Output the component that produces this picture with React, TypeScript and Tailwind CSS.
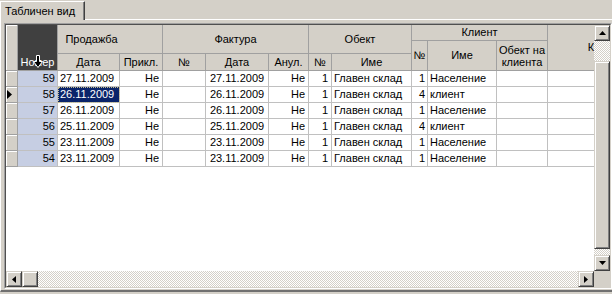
import React from "react";

type Row = {
  n: number;
  d: string;
  p: string;
  fd: string;
  a: string;
  on: number;
  oi: string;
  kn: number;
  ki: string;
  sel?: boolean;
};

const rows: Row[] = [
  { n: 59, d: "27.11.2009", p: "Не", fd: "27.11.2009", a: "Не", on: 1, oi: "Главен склад", kn: 1, ki: "Население" },
  { n: 58, d: "26.11.2009", p: "Не", fd: "26.11.2009", a: "Не", on: 1, oi: "Главен склад", kn: 4, ki: "клиент", sel: true },
  { n: 57, d: "26.11.2009", p: "Не", fd: "26.11.2009", a: "Не", on: 1, oi: "Главен склад", kn: 1, ki: "Население" },
  { n: 56, d: "25.11.2009", p: "Не", fd: "25.11.2009", a: "Не", on: 1, oi: "Главен склад", kn: 4, ki: "клиент" },
  { n: 55, d: "23.11.2009", p: "Не", fd: "23.11.2009", a: "Не", on: 1, oi: "Главен склад", kn: 1, ki: "Население" },
  { n: 54, d: "23.11.2009", p: "Не", fd: "23.11.2009", a: "Не", on: 1, oi: "Главен склад", kn: 1, ki: "Население" },
];

const hc =
  "bg-[#d4d0c8] border-r border-b border-[#a0a0a0] flex items-center justify-center overflow-hidden whitespace-nowrap";
const dc = "border-r border-b border-[#c0c0c0] h-[16px] flex items-center overflow-hidden whitespace-nowrap px-[2px]";
const btn =
  "bg-[#d4d0c8] border border-t-[#d4d0c8] border-l-[#d4d0c8] border-r-[#404040] border-b-[#404040] shadow-[inset_1px_1px_0_#ffffff,inset_-1px_-1px_0_#808080] flex items-center justify-center";
const track =
  "bg-[image:repeating-conic-gradient(#d4d0c8_0%_25%,#ffffff_0%_50%)] bg-[length:2px_2px]";

function Arrow({ dir }: { dir: "up" | "down" | "left" | "right" }) {
  const pts =
    dir === "up"
      ? "0,4 7,4 3.5,0"
      : dir === "down"
      ? "0,0 7,0 3.5,4"
      : dir === "left"
      ? "4,0 4,7 0,3.5"
      : "0,0 0,7 4,3.5";
  const w = dir === "up" || dir === "down" ? 7 : 4;
  const h = dir === "up" || dir === "down" ? 4 : 7;
  return (
    <svg width={w} height={h} viewBox={`0 0 ${w} ${h}`}>
      <polygon points={pts} fill="#000" />
    </svg>
  );
}

export default function App() {
  return (
    <div className="w-[612px] h-[294px] bg-[#d4d0c8] overflow-hidden font-['Liberation_Sans',Arial,sans-serif] text-[11px] leading-none text-black flex flex-col">
      {/* tab strip */}
      <div className="h-[20px] flex shrink-0">
        <div className="mt-[1px] w-[85px] h-[19px] border-t border-l border-white border-r border-r-[#404040] shadow-[inset_-1px_0_0_#808080] flex items-center pl-[4px]">
          Табличен вид
        </div>
        <div className="flex-1 border-b border-white"></div>
      </div>

      {/* panel */}
      <div className="h-[272px] border-l border-white border-b-2 border-b-[#707070] pl-[3px] pt-[3px] shrink-0">
        <div className="w-[608px] h-[266px] border border-t-[#a0a0a0] border-l-[#a0a0a0] border-r-white border-b-white">
          <div className="w-[606px] h-[264px] border border-t-[#505050] border-l-[#505050] border-r-[#d4d0c8] border-b-[#d4d0c8] flex flex-col">
            <div className="h-[246px] flex">
              {/* table area */}
              <div className="w-[588px] h-[246px] bg-white overflow-hidden">
                <div className="grid grid-cols-[12px_40px_62px_43px_43px_63px_40px_23px_80px_16px_69px_51px_130px] grid-rows-[16px_13px_17px] w-max">
                  <div className={`${hc} col-start-1 row-start-1 row-span-3 shadow-[inset_1px_1px_0_#ffffff]`}></div>
                  <div className="col-start-2 row-start-1 row-span-3 bg-[#404040] border-r border-b border-[#a0a0a0] text-white flex flex-col justify-end relative">
                    <div className="h-[16px] flex items-center justify-center">Номер</div>
                    <svg
                      className="absolute left-[15px] top-[30px]"
                      width="10"
                      height="13"
                      viewBox="0 0 10 13"
                    >
                      <polygon
                        points="3.5,0.5 6.5,0.5 6.5,6.5 9.5,6.5 5,12.5 0.5,6.5 3.5,6.5"
                        fill="#000"
                        stroke="#fff"
                        strokeWidth="1"
                      />
                    </svg>
                  </div>
                  <div className={`${hc} col-start-3 col-span-2 row-start-1 row-span-2 pr-[37px]`}>Продажба</div>
                  <div className={`${hc} col-start-5 col-span-3 row-start-1 row-span-2`}>Фактура</div>
                  <div className={`${hc} col-start-8 col-span-2 row-start-1 row-span-2`}>Обект</div>
                  <div className={`${hc} col-start-10 col-span-3 row-start-1`}>Клиент</div>
                  <div className={`${hc} col-start-13 row-start-1 row-span-3`}>Коментар</div>
                  <div className={`${hc} col-start-10 row-start-2 row-span-2`}>№</div>
                  <div className={`${hc} col-start-11 row-start-2 row-span-2`}>Име</div>
                  <div className={`${hc} col-start-12 row-start-2 row-span-2 flex-col leading-[12px]`}>
                    <span>Обект на</span>
                    <span>клиента</span>
                  </div>
                  <div className={`${hc} col-start-3 row-start-3`}>Дата</div>
                  <div className={`${hc} col-start-4 row-start-3`}>Прикл.</div>
                  <div className={`${hc} col-start-5 row-start-3`}>№</div>
                  <div className={`${hc} col-start-6 row-start-3`}>Дата</div>
                  <div className={`${hc} col-start-7 row-start-3`}>Анул.</div>
                  <div className={`${hc} col-start-8 row-start-3`}>№</div>
                  <div className={`${hc} col-start-9 row-start-3`}>Име</div>
                </div>
                {rows.map((r) => (
                  <div
                    key={r.n}
                    className="grid grid-cols-[12px_40px_62px_43px_43px_63px_40px_23px_80px_16px_69px_51px_130px] w-max"
                  >
                    <div className="h-[16px] bg-[#d4d0c8] border-r border-b border-[#a0a0a0] shadow-[inset_1px_1px_0_#ffffff] flex items-center pl-[1px]">
                      {r.sel && (
                        <svg width="5" height="9" viewBox="0 0 5 9">
                          <polygon points="0,0 5,4.5 0,9" fill="#000" />
                        </svg>
                      )}
                    </div>
                    <div className={`${dc} bg-[#c6cee3] justify-end`}>{r.n}</div>
                    <div
                      className={`${dc} ${
                        r.sel
                          ? "bg-[#0a246a] text-white outline-1 outline-dotted outline-[#c8c090] -outline-offset-1"
                          : ""
                      }`}
                    >
                      {r.d}
                    </div>
                    <div className={`${dc} justify-end pr-[3px]`}>{r.p}</div>
                    <div className={dc}></div>
                    <div className={`${dc} justify-center`}>{r.fd}</div>
                    <div className={`${dc} justify-end pr-[3px]`}>{r.a}</div>
                    <div className={`${dc} justify-end pr-[3px]`}>{r.on}</div>
                    <div className={dc}>{r.oi}</div>
                    <div className={`${dc} justify-end pr-[2px]`}>{r.kn}</div>
                    <div className={dc}>{r.ki}</div>
                    <div className={dc}></div>
                    <div className={dc}></div>
                  </div>
                ))}
              </div>
              {/* vertical scrollbar */}
              <div className="w-[16px] h-[246px] flex flex-col">
                <div className={`${btn} h-[16px] shrink-0`}>
                  <Arrow dir="up" />
                </div>
                <div className={`${track} h-[20px] shrink-0`}></div>
                <div className={`${btn} h-[188px] shrink-0`}></div>
                <div className={`${track} flex-1`}></div>
                <div className={`${btn} h-[16px] shrink-0`}>
                  <Arrow dir="down" />
                </div>
              </div>
            </div>
            {/* horizontal scrollbar */}
            <div className="h-[16px] flex">
              <div className="w-[588px] h-[16px] flex">
                <div className={`${btn} w-[16px] shrink-0`}>
                  <Arrow dir="left" />
                </div>
                <div className={`${btn} w-[16px] shrink-0`}></div>
                <div className={`${track} flex-1`}></div>
                <div className={`${btn} w-[16px] shrink-0`}>
                  <Arrow dir="right" />
                </div>
              </div>
              <div className="w-[16px] h-[16px] bg-[#d4d0c8]"></div>
            </div>
          </div>
        </div>
      </div>
    </div>
  );
}
